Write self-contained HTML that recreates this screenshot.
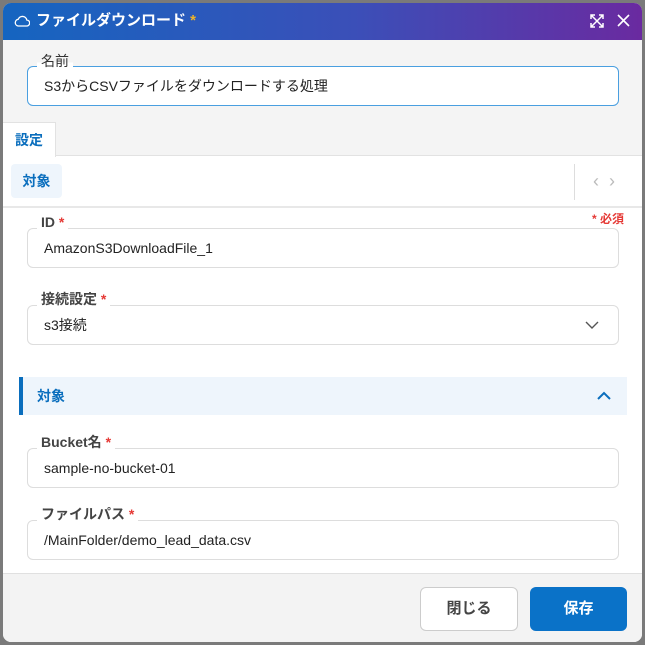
<html><head><style>
body{margin:0;width:645px;height:645px;background:#7a7a7a;font-family:"Liberation Sans","Noto Sans CJK JP",sans-serif;position:relative;overflow:hidden}
.dlg{position:absolute;left:3px;top:3px;width:639px;height:639px;background:#fff;border-radius:8px;overflow:hidden}
.hdr{position:absolute;left:0;top:0;width:639px;height:37px;background:linear-gradient(90deg,#1565c0,#3b4fb8 55%,#6a2aa0);color:#fff;font-size:15px;font-weight:bold}
.a{position:absolute}
.inp{position:absolute;left:24px;width:592px;height:40px;box-sizing:border-box;border:1px solid #ddd;border-radius:6px;background:#fff;font-size:14px;color:#222;line-height:38px;padding-left:16px}
.lbl{position:absolute;left:34px;font-size:14px;font-weight:bold;color:#444;background:#fff;padding:0 4px;line-height:16px}
.req{color:#e53935}
</style></head><body>
<div class="dlg">
<div class="hdr">
<svg class="a" style="left:11px;top:11px" width="16" height="14" viewBox="0 0 16 14"><path d="M4 12h8.5a3 3 0 0 0 .3-6A4.5 4.5 0 0 0 4.2 5.3 3.4 3.4 0 0 0 4 12z" fill="none" stroke="#fff" stroke-width="1.3"/></svg>
<div class="a" style="left:33px;top:9px;line-height:18px">ファイルダウンロード <span style="color:#f0b429">*</span></div>
<svg class="a" style="left:586px;top:10px" width="16" height="16" viewBox="0 0 16 16" stroke="#fff" stroke-width="1.5" fill="none"><path d="M2 2l12 12M14 2L2 14M2 6V2h4M10 2h4v4M14 10v4h-4M6 14H2v-4"/></svg>
<svg class="a" style="left:614px;top:11px" width="13" height="13" viewBox="0 0 13 13" stroke="#fff" stroke-width="1.6"><path d="M1 1l11 11M12 1L1 12"/></svg>
</div>
<div class="a" style="left:0;top:37px;width:639px;height:115px;background:#f4f4f4;border-bottom:1px solid #e2e2e2"></div>
<div class="a" style="left:24px;top:63px;width:592px;height:40px;box-sizing:border-box;border:1px solid #4a9fe0;border-radius:6px;background:#fff;font-size:14px;line-height:38px;padding-left:16px;color:#222">S3からCSVファイルをダウンロードする処理</div>
<div class="a" style="left:34px;top:50px;font-size:14px;color:#333;background:linear-gradient(#f4f4f4 60%,#fff 60%);padding:0 4px;line-height:16px">名前</div>
<div class="a" style="left:0;top:119px;width:52px;height:34px;background:#fff;border-right:1px solid #e2e2e2;border-top:1px solid #e2e2e2;color:#0a6ebd;font-weight:bold;font-size:14px;line-height:34px;text-indent:12px">設定</div>
<div class="a" style="left:8px;top:161px;width:51px;height:34px;background:#eef5fc;border-radius:4px;color:#0a6ebd;font-weight:bold;font-size:14px;line-height:34px;text-align:center">対象</div>
<div class="a" style="left:571px;top:161px;width:1px;height:36px;background:#ddd"></div>
<div class="a" style="left:590px;top:168px;color:#bbb;font-size:18px">&#8249;&nbsp;&nbsp;&#8250;</div>
<div class="a" style="left:0;top:203px;width:639px;height:2px;background:#e8e8e8"></div>
<div class="a" style="left:589px;top:207px;font-size:12px;font-weight:bold;color:#e53935">* 必須</div>
<div class="inp" style="top:225px">AmazonS3DownloadFile_1</div>
<div class="lbl" style="top:211px">ID <span class="req">*</span></div>
<div class="inp" style="top:302px">s3接続</div>
<svg class="a" style="left:582px;top:318px" width="14" height="9" viewBox="0 0 14 9"><path d="M1 1l6 6 6-6" stroke="#555" stroke-width="1.4" fill="none"/></svg>
<div class="lbl" style="top:288px">接続設定 <span class="req">*</span></div>
<div class="a" style="left:16px;top:374px;width:608px;height:38px;background:#eef5fc;border-left:4px solid #0a6ebd;box-sizing:border-box;color:#0a6ebd;font-weight:bold;font-size:14px;line-height:38px;padding-left:14px">対象</div>
<svg class="a" style="left:594px;top:388px" width="14" height="9" viewBox="0 0 14 9"><path d="M1 8l6-6 6 6" stroke="#0a6ebd" stroke-width="2" fill="none"/></svg>
<div class="inp" style="top:445px">sample-no-bucket-01</div>
<div class="lbl" style="top:431px">Bucket名 <span class="req">*</span></div>
<div class="inp" style="top:517px">/MainFolder/demo_lead_data.csv</div>
<div class="lbl" style="top:503px">ファイルパス <span class="req">*</span></div>
<div class="a" style="left:0;top:570px;width:639px;height:69px;background:#f3f3f3;border-top:1px solid #e0e0e0"></div>
<div class="a" style="left:417px;top:584px;width:96px;height:42px;border:1px solid #ccc;border-radius:6px;background:#fff;font-size:15px;font-weight:bold;color:#444;line-height:42px;text-align:center">閉じる</div>
<div class="a" style="left:527px;top:584px;width:97px;height:44px;border-radius:6px;background:#0a72c8;font-size:15px;font-weight:bold;color:#fff;line-height:44px;text-align:center">保存</div>
</div>
</body></html>
